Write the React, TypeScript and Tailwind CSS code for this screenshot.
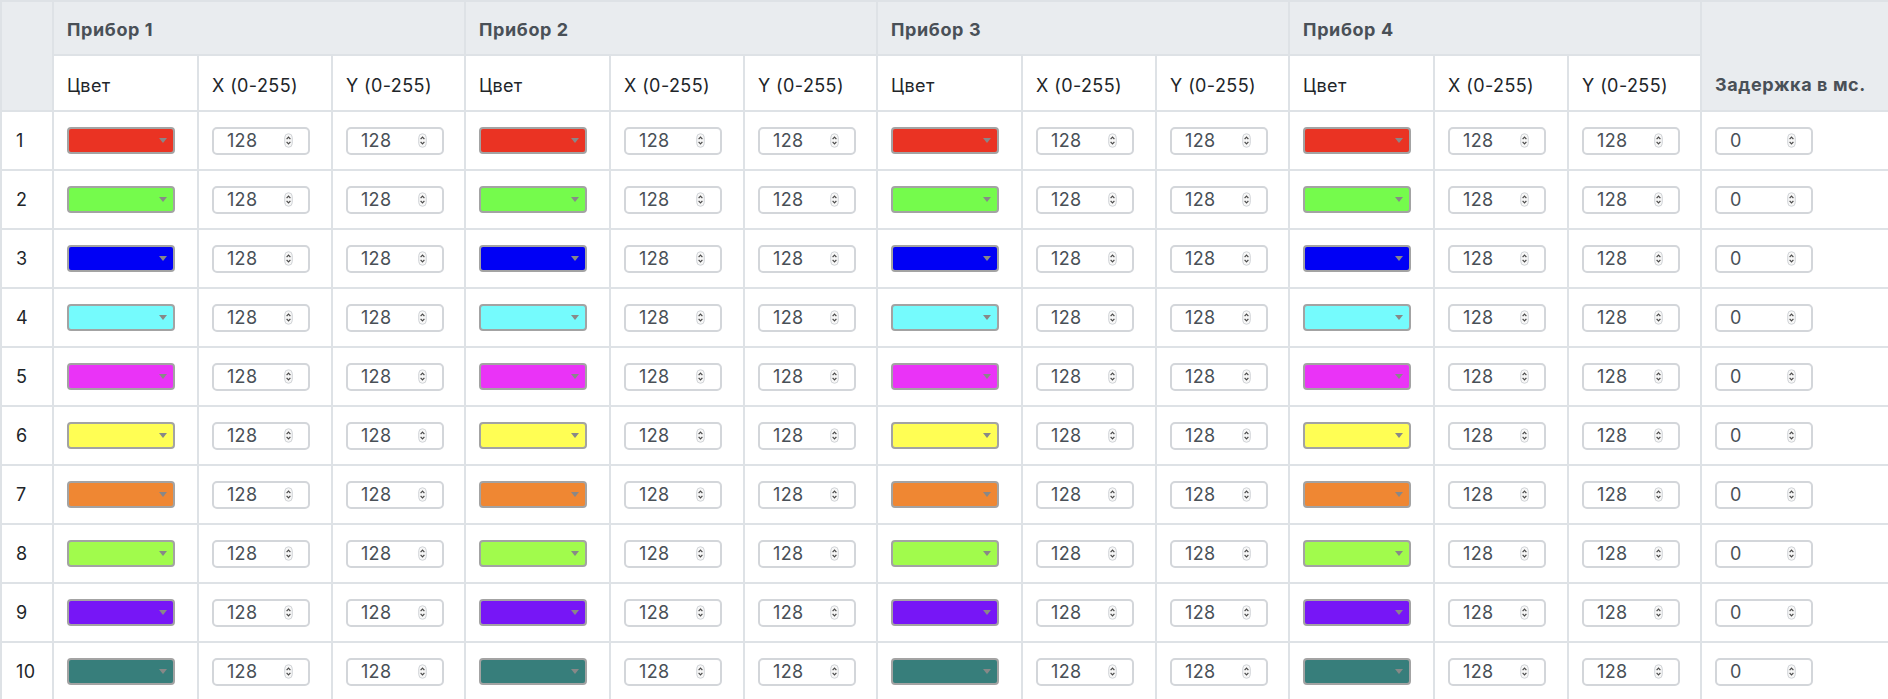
const DEVICES = ["Прибор 1", "Прибор 2", "Прибор 3", "Прибор 4"];

const ROW_COLORS = [
  "bg-[#ea3323]",
  "bg-[#75fb4c]",
  "bg-[#0000f5]",
  "bg-[#75fbfd]",
  "bg-[#ea33f7]",
  "bg-[#fffe54]",
  "bg-[#ef8733]",
  "bg-[#a1fb4c]",
  "bg-[#7716f6]",
  "bg-[#377e7b]",
];

const cell = "border-2 border-[#dee2e6] px-[13px]";

function Spinner() {
  return (
    <svg width="9" height="15" viewBox="0 0 9 15" className="shrink-0">
      <rect x="0.75" y="0.75" width="7.5" height="13.5" rx="3.75" fill="#f7f7f7" stroke="#cfd2d6" strokeWidth="1" />
      <path d="M2.6 6.2 4.5 4.1 6.4 6.2" fill="none" stroke="#4a4a4a" strokeWidth="1.2" />
      <path d="M2.6 8.8 4.5 10.9 6.4 8.8" fill="none" stroke="#4a4a4a" strokeWidth="1.2" />
    </svg>
  );
}

function NumberBox({ value }: { value: number }) {
  return (
    <div className="flex h-[28px] w-[98px] items-center justify-between rounded-[5px] border-2 border-[#d3d6da] bg-white pl-[13px] pr-[15px] text-[18px] leading-none tracking-[0.3px] text-[#495057]">
      <span>{value}</span>
      <Spinner />
    </div>
  );
}

function ColorSelect({ color }: { color: string }) {
  return (
    <div className={`flex h-[27px] w-[108px] items-center justify-end rounded-[4px] border-2 border-[#a3a3a3] pr-[6px] ${color}`}>
      <svg width="8" height="5" viewBox="0 0 8 5">
        <path d="M0 0h8L4 5z" fill="#888888" />
      </svg>
    </div>
  );
}

export default function App() {
  return (
    <div className="h-[699px] w-[1888px] overflow-hidden bg-white font-['Inter',sans-serif] text-[18px] tracking-[0.4px] text-[#212529]">
      <table className="w-[1888px] table-fixed border-collapse">
        <colgroup>
          <col className="w-[52px]" />
          {DEVICES.map((d) => (
            <>
              <col key={d + "c"} className="w-[145px]" />
              <col key={d + "x"} className="w-[134px]" />
              <col key={d + "y"} className="w-[133px]" />
            </>
          ))}
          <col className="w-[188px]" />
        </colgroup>
        <thead>
          <tr className="h-[54px]">
            <th rowSpan={2} className={`${cell} bg-[#e9ecef]`} />
            {DEVICES.map((d) => (
              <th key={d} colSpan={3} className={`${cell} bg-[#e9ecef] pt-[2px] text-left font-bold tracking-[0.6px] text-[#495057]`}>
                {d}
              </th>
            ))}
            <th rowSpan={2} className={`${cell} bg-[#e9ecef] pb-[12px] text-left align-bottom font-bold tracking-[0.6px] whitespace-nowrap text-[#495057]`}>
              Задержка в мс.
            </th>
          </tr>
          <tr className="h-[56px]">
            {DEVICES.map((d) => (
              <>
                <th key={d + "c"} className={`${cell} pt-[4px] text-left font-normal`}>Цвет</th>
                <th key={d + "x"} className={`${cell} pt-[4px] text-left font-normal`}>X (0-255)</th>
                <th key={d + "y"} className={`${cell} pt-[4px] text-left font-normal`}>Y (0-255)</th>
              </>
            ))}
          </tr>
        </thead>
        <tbody>
          {ROW_COLORS.map((color, i) => (
            <tr key={i} className="h-[59px]">
              <td className={`${cell} pl-[14px]`}>{i + 1}</td>
              {DEVICES.map((d) => (
                <>
                  <td key={d + "c"} className={cell}>
                    <ColorSelect color={color} />
                  </td>
                  <td key={d + "x"} className={cell}>
                    <NumberBox value={128} />
                  </td>
                  <td key={d + "y"} className={cell}>
                    <NumberBox value={128} />
                  </td>
                </>
              ))}
              <td className={cell}>
                <NumberBox value={0} />
              </td>
            </tr>
          ))}
        </tbody>
      </table>
    </div>
  );
}
